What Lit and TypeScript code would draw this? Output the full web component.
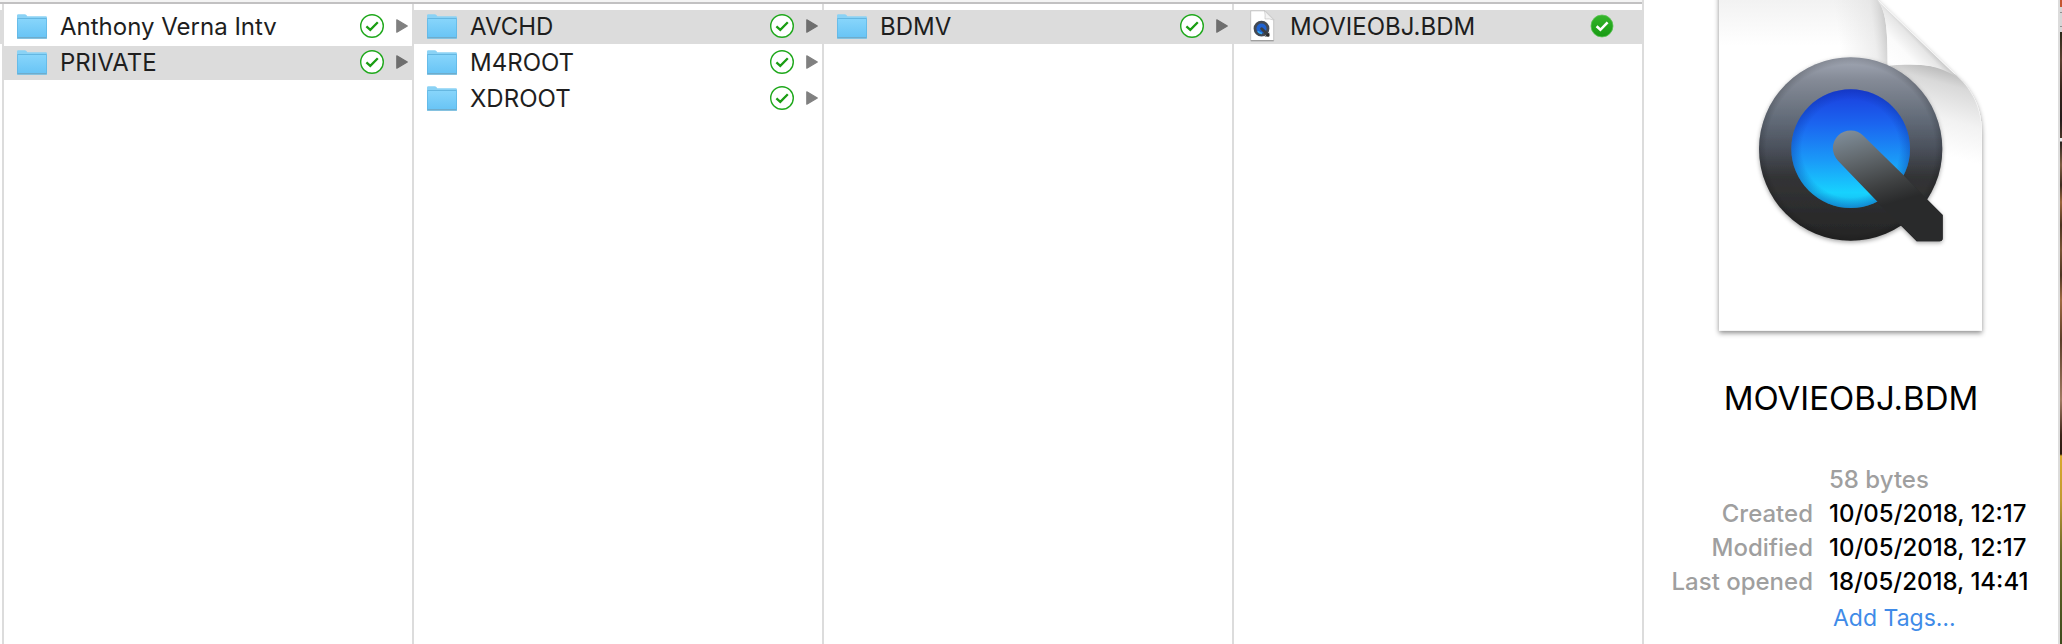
import { LitElement, html, svg, css } from "lit";
import { customElement, property } from "lit/decorators.js";

type Kind = "folder" | "movie";
interface Entry {
  name: string;
  kind: Kind;
  selected?: boolean;
}

const COLUMNS: { label: string; entries: Entry[] }[] = [
  {
    label: "Volume",
    entries: [
      { name: "Anthony Verna Intv", kind: "folder" },
      { name: "PRIVATE", kind: "folder", selected: true },
    ],
  },
  {
    label: "PRIVATE",
    entries: [
      { name: "AVCHD", kind: "folder", selected: true },
      { name: "M4ROOT", kind: "folder" },
      { name: "XDROOT", kind: "folder" },
    ],
  },
  { label: "AVCHD", entries: [{ name: "BDMV", kind: "folder", selected: true }] },
  { label: "BDMV", entries: [{ name: "MOVIEOBJ.BDM", kind: "movie", selected: true }] },
];

const FACTS: [string, string][] = [
  ["Created", "10/05/2018, 12:17"],
  ["Modified", "10/05/2018, 12:17"],
  ["Last opened", "18/05/2018, 14:41"],
];

const folderIcon = html`<svg class="icon" viewBox="0 0 30 34" aria-hidden="true">
  <defs>
    <linearGradient id="front" x1="0" y1="0" x2="0" y2="1">
      <stop offset="0" stop-color="#87d5fb" />
      <stop offset="1" stop-color="#68c4f5" />
    </linearGradient>
  </defs>
  <path d="M0 29V5.500Q0 4.200 1.300 4.200H7.500Q8.800 4.200 9.600 5.200L10.300 6.200H28.800Q30 6.200 30 7.400V29Z" fill="#8ad2f5" />
  <path d="M0.300 8.600H29.700" stroke="#62b4df" stroke-width="1" />
  <path d="M0 9H30V27.600H0Z" fill="url(#front)" />
  <path d="M0.400 9V27.500H29.600V9" fill="none" stroke="#5fb5e2" stroke-width="0.800" />
  <path d="M0.500 27.900H29.500" stroke="#7a9aab" stroke-width="0.900" opacity="0.800" />
</svg>`;

const movieIcon = html`<svg class="icon" viewBox="0 0 30 34" aria-hidden="true">
  <path d="M3.700 0.800H18L26.700 9.500V30.500H3.700Z" fill="#fff" stroke="#bdbdbd" stroke-width="0.800" />
  <path d="M3.700 30.800H26.700" stroke="#8f8f8f" stroke-width="1" />
  <path d="M17.500 0.800Q18.500 5 18 9Q22 8.200 26.700 10Z" fill="#f4f4f4" stroke="#c4c4c4" stroke-width="0.700" />
  <circle cx="14.500" cy="18.600" r="6.500" fill="#1f62d0" stroke="#434a54" stroke-width="2.800" />
  <path d="M10.800 21.300A5 5 0 0 0 15 23.300" stroke="#35a9f5" stroke-width="1.800" fill="none" />
  <path d="M14.700 18.800L21 25" stroke="#3a3e43" stroke-width="3" stroke-linecap="round" />
  <path d="M17.500 26.500H22.300V22.500Z" fill="#2a2a2a" />
</svg>`;

const syncedOutline = html`<svg class="badge" viewBox="0 0 24 24" role="img" aria-label="Synced">
  <circle cx="12" cy="12" r="11.300" fill="#fff" stroke="#1fa81c" stroke-width="1.400" />
  <path d="M6.400 12.300L10.300 15.800L17.800 8.300" fill="none" stroke="#1a9d12" stroke-width="2.300" />
</svg>`;

const syncedSolid = html`<svg class="badge" viewBox="0 0 24 24" role="img" aria-label="Available offline">
  <defs>
    <linearGradient id="solid" x1="0" y1="0" x2="0" y2="1">
      <stop offset="0" stop-color="#35b52b" />
      <stop offset="1" stop-color="#169a12" />
    </linearGradient>
  </defs>
  <circle cx="12" cy="12" r="11" fill="url(#solid)" stroke="#5cc455" stroke-width="0.800" />
  <path d="M6.600 12.300L10.400 15.800L17.600 8.300" fill="none" stroke="#fff" stroke-width="2.600" />
</svg>`;

const arrow = html`<svg class="arrow" viewBox="0 0 12 14" aria-hidden="true">
  <path d="M0.800 0.800L11.300 7L0.800 13.200Z" fill="currentColor" stroke="currentColor" stroke-width="1.200" stroke-linejoin="round" />
</svg>`;

const handle = "M672 407L792 525L865 600L910 645V715Q910 724 901 724H832L787 679L713 604L596 482A53 53 0 0 1 672 407Z";

const documentArt = svg`
  <defs>
    <linearGradient id="sheet" x1="0" y1="0" x2="0" y2="1">
      <stop offset="0" stop-color="#f1f1f1" /><stop offset="0.700" stop-color="#fff" />
    </linearGradient>
    <linearGradient id="sheetEdge" x1="600" y1="130" x2="750" y2="110" gradientUnits="userSpaceOnUse">
      <stop offset="0" stop-color="#ddd" stop-opacity="0" />
      <stop offset="0.700" stop-color="#ddd" stop-opacity="0.500" />
      <stop offset="1" stop-color="#c6c6c6" />
    </linearGradient>
    <linearGradient id="flap" x1="745" y1="197" x2="838" y2="108" gradientUnits="userSpaceOnUse">
      <stop offset="0" stop-color="#fff" /><stop offset="0.500" stop-color="#fbfbfb" />
      <stop offset="0.850" stop-color="#e6e6e6" /><stop offset="1" stop-color="#c4c4c4" />
    </linearGradient>
    <linearGradient id="under" x1="930" y1="195" x2="860" y2="450" gradientUnits="userSpaceOnUse">
      <stop offset="0" stop-color="#b0b0b0" /><stop offset="0.220" stop-color="#d9d9d9" />
      <stop offset="0.600" stop-color="#f2f2f2" /><stop offset="1" stop-color="#fff" />
    </linearGradient>
    <linearGradient id="ring" x1="0" y1="0" x2="0" y2="1">
      <stop offset="0" stop-color="#a3a9b6" /><stop offset="0.120" stop-color="#858b97" />
      <stop offset="0.350" stop-color="#606976" /><stop offset="0.500" stop-color="#4a505b" />
      <stop offset="0.650" stop-color="#333436" /><stop offset="1" stop-color="#252525" />
    </linearGradient>
    <radialGradient id="ringEdge">
      <stop offset="0.920" stop-color="#000" stop-opacity="0" />
      <stop offset="1" stop-color="#000" stop-opacity="0.160" />
    </radialGradient>
    <linearGradient id="lens" x1="0" y1="0" x2="0" y2="1">
      <stop offset="0" stop-color="#1b3ddd" /><stop offset="0.300" stop-color="#1b66f0" />
      <stop offset="0.600" stop-color="#1a9af8" /><stop offset="0.870" stop-color="#17d2fe" />
      <stop offset="1" stop-color="#16b8ee" />
    </linearGradient>
    <radialGradient id="lensEdge">
      <stop offset="0.820" stop-color="#0a2f9a" stop-opacity="0" />
      <stop offset="1" stop-color="#0a2f9a" stop-opacity="0.350" />
    </radialGradient>
    <linearGradient id="tail" x1="634" y1="391" x2="700" y2="625" gradientUnits="userSpaceOnUse">
      <stop offset="0" stop-color="#7e8c98" /><stop offset="0.350" stop-color="#636a6f" />
      <stop offset="0.750" stop-color="#3f4142" /><stop offset="1" stop-color="#292a2b" />
    </linearGradient>
    <filter id="shade" x="-10%" y="-10%" width="120%" height="120%">
      <feDropShadow dx="0" dy="7" stdDeviation="8" flood-color="#000" flood-opacity="0.450" />
    </filter>
    <filter id="soft" x="-10%" y="-10%" width="120%" height="120%">
      <feDropShadow dx="0" dy="5" stdDeviation="6" flood-color="#000" flood-opacity="0.350" />
    </filter>
  </defs>
  <path d="M239 -40H690L715 0L950 225C1005 275 1028 330 1028 400V992H239Z" fill="#fff" filter="url(#shade)" />
  <path d="M239 -10H708C738 25 745 70 745 197V200H239Z" fill="url(#sheet)" />
  <path d="M560 -10H708C738 25 745 70 745 197L700 230H560Z" fill="url(#sheetEdge)" />
  <path d="M745 197C850 188 905 198 950 225C1005 275 1026 330 1027 400V500H745Z" fill="url(#under)" />
  <path d="M708 -5L960 236C900 196 850 188 745 197C745 70 738 25 708 -5Z" fill="url(#flap)" />
  <g filter="url(#soft)">
    <circle cx="634" cy="447" r="275" fill="url(#ring)" />
    <path d="${handle}" fill="#292a2b" />
  </g>
  <circle cx="634" cy="447" r="275" fill="url(#ringEdge)" />
  <circle cx="634" cy="446" r="178" fill="url(#lens)" />
  <circle cx="634" cy="446" r="178" fill="url(#lensEdge)" />
  <path d="${handle}" fill="url(#tail)" />`;

@customElement("file-row")
export class FileRow extends LitElement {
  @property({ attribute: false }) entry!: Entry;

  static styles = css`
    :host {
      display: block;
    }
    .row {
      display: flex;
      align-items: center;
      width: 100%;
      height: 34px;
      padding: 0 4px 0 13px;
      border: 0;
      background: transparent;
      color: #1e1e1e;
      font: 400 24px/34px Inter, "Liberation Sans", sans-serif;
      text-align: left;
    }
    .selected {
      background: #dcdcdc;
    }
    .icon {
      flex: none;
      width: 30px;
      height: 34px;
    }
    .name {
      flex: 1;
      min-width: 0;
      margin-left: 13px;
      overflow: hidden;
      text-overflow: ellipsis;
      white-space: nowrap;
    }
    .badge {
      flex: none;
      width: 24px;
      height: 24px;
      margin-bottom: 2px;
    }
    .arrow {
      flex: none;
      width: 12px;
      height: 14px;
      margin: 0 0 2px 12px;
      color: #808080;
    }
    .selected .arrow {
      color: #6e6e6e;
    }
    .none {
      flex: none;
      width: 24px;
    }
  `;

  render() {
    const { name, kind, selected } = this.entry;
    const folder = kind === "folder";
    return html`<button class="row ${selected ? "selected" : ""}" type="button" aria-pressed=${selected ? "true" : "false"}>
      ${folder ? folderIcon : movieIcon}
      <span class="name">${name}</span>
      ${folder ? syncedOutline : syncedSolid} ${folder ? arrow : html`<span class="none"></span>`}
    </button>`;
  }
}

@customElement("file-preview")
export class FilePreview extends LitElement {
  static styles = css`
    :host {
      display: block;
      color: #000;
      font: 400 24px/34px Inter, "Liberation Sans", sans-serif;
    }
    .art {
      display: block;
      width: 290px;
      height: 350px;
      margin: 0 auto;
    }
    .title {
      margin: 28px 0 0;
      font-size: 33px;
      font-weight: 400;
      line-height: 40px;
      text-align: center;
    }
    .facts {
      display: grid;
      grid-template-columns: 169px 1fr;
      column-gap: 16px;
      margin: 45px 0 0;
      white-space: nowrap;
    }
    .label {
      color: #9f9f9f;
      font-weight: 500;
      text-align: right;
    }
    .value {
      grid-column: 2;
      margin: 0;
      font-weight: 500;
    }
    .size {
      color: #9f9f9f;
    }
    .tags {
      display: block;
      margin: 2px 0 0 185px;
      padding: 0 4px;
      border: 0;
      background: none;
      color: #3f8be8;
      font: inherit;
      font-size: 23px;
    }
  `;

  render() {
    return html`<svg class="art" viewBox="200 0 870 1050" role="img" aria-label="QuickTime document">${documentArt}</svg>
      <h1 class="title">MOVIEOBJ.BDM</h1>
      <dl class="facts">
        <dd class="value size">58 bytes</dd>
        ${FACTS.map(([label, value]) => html`<dt class="label">${label}</dt><dd class="value">${value}</dd>`)}
      </dl>
      <button class="tags" type="button">Add Tags…</button>`;
  }
}

@customElement("app-root")
export class AppRoot extends LitElement {
  static styles = css`
    :host {
      display: flex;
      height: 100vh;
      overflow: hidden;
      background: #fff;
    }
    .browser {
      display: flex;
      flex: 1;
      flex-direction: column;
      min-width: 0;
    }
    .toolbar-edge {
      height: 2px;
      border-bottom: 2px solid #c2c1c2;
      background: #f4f4f4;
    }
    .columns {
      display: grid;
      flex: 1;
      grid-template-columns: 2px repeat(4, minmax(0, 1fr));
    }
    .parent {
      height: 34px;
      margin-top: 6px;
      background: #dcdcdc;
    }
    .column {
      display: flex;
      flex-direction: column;
      gap: 2px;
      margin: 0;
      padding: 6px 0 0;
      border-left: 2px solid #dcdcdc;
      list-style: none;
    }
    .preview {
      flex: none;
      width: 414px;
      border: solid #dcdcdc;
      border-width: 0 2px;
      overflow: hidden;
    }
    .desktop {
      flex: none;
      width: 2px;
      background: linear-gradient(
        #c4552f 0 7px,
        #d6d6d6 7px 12px,
        #8f8f8f 12px 13px,
        #d6d6d6 13px 26px,
        #8f8f8f 26px 27px,
        #d6d6d6 27px 32px,
        #2a2a1a 32px,
        #5b4030 60px,
        #33231a 90px,
        #241c1c 120px,
        #4a3526 138px,
        #e8e8e8 138px 141px,
        #2a2420 142px,
        #7d5c40 165px,
        #3c2c20 185px,
        #9a653a 202px,
        #4a3320 225px,
        #7a5434 250px,
        #4b3422 275px,
        #a06a40 300px,
        #5a3d28 340px,
        #a07a60 400px,
        #3a2418 435px,
        #2a1a10 454px,
        #d9a92c 456px,
        #c09a30 500px,
        #6c6a2a 550px,
        #3c4a1c 644px
      );
    }
  `;

  render() {
    return html`<main class="browser">
        <div class="toolbar-edge"></div>
        <div class="columns">
          <div class="parent"></div>
          ${COLUMNS.map(
            (column) => html`<ul class="column" aria-label=${column.label}>
              ${column.entries.map((entry) => html`<li><file-row .entry=${entry}></file-row></li>`)}
            </ul>`,
          )}
        </div>
      </main>
      <aside class="preview" aria-label="Preview"><file-preview></file-preview></aside>
      <div class="desktop"></div>`;
  }
}
